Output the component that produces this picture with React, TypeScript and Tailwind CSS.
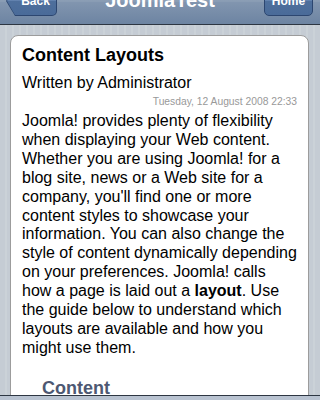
import React from "react";

const font = { fontFamily: '"Liberation Sans", Arial, Helvetica, sans-serif' };

function BackButton() {
  return (
    <div className="relative h-[30px] w-[51px] rounded-r-[5px] bg-[#2c4670] [clip-path:polygon(0_50%,9px_0,100%_0,100%_100%,9px_100%)]">
      <div className="absolute inset-[1px] rounded-r-[4px] bg-[linear-gradient(#7d99bf,#6181ae_50%,#4e6f9c_51%,#4a6b99)] [clip-path:polygon(0_50%,8px_0,100%_0,100%_100%,8px_100%)]" />
      <span className="relative flex h-full items-center justify-center pl-[8px] text-[12px] font-bold text-white">
        Back
      </span>
    </div>
  );
}

function HomeButton() {
  return (
    <div className="flex h-[30px] w-[49px] items-center justify-center rounded-[5px] border border-[#2c4670] bg-[linear-gradient(#7d99bf,#6181ae_50%,#4e6f9c_51%,#4a6b99)] text-[12px] font-bold text-white">
      Home
    </div>
  );
}

export default function App() {
  return (
    <div className="flex h-[400px] w-[320px] flex-col overflow-hidden" style={font}>
      <header className="-mt-[20px] grid h-[45px] shrink-0 grid-cols-[1fr_auto_1fr] items-center border-b border-[#2d3642] bg-[linear-gradient(#cdd5df,#b0bccd_3%,#889bb3_50%,#8195af_51%,#6d84a2)] px-[6px]">
        <div className="-mt-[2px] flex justify-start">
          <BackButton />
        </div>
        <h1 className="-mt-[4px] text-[20px] font-bold text-white">JoomlaTest</h1>
        <div className="-mt-[2px] flex justify-end pr-[1px]">
          <HomeButton />
        </div>
      </header>

      <main className="flex-1 overflow-hidden bg-[image:repeating-linear-gradient(90deg,#c5ccd4_0px,#c5ccd4_5px,#cbd2d8_5px,#cbd2d8_7px)] pl-[10px] pr-[11px] pt-[10px]">
        <div className="rounded-[8px] border border-[#9c9c9c] bg-white px-[11px] pt-[9px] pb-4 text-black">
          <h2 className="text-[18px] font-bold leading-[21px]">Content Layouts</h2>
          <p className="mt-[7px] text-[16px] leading-[19px]">Written by Administrator</p>
          <p className="mt-[4px] text-right text-[10.3px] leading-[12px] text-[#999]">
            Tuesday, 12 August 2008 22:33
          </p>
          <p className="mt-[4px] text-[16px] leading-[18.9px]">
            Joomla! provides plenty of flexibility when displaying your Web content. Whether you are
            using Joomla! for a blog site, news or a Web site for a company, you'll find one or more
            content styles to showcase your information. You can also change the style of content
            dynamically depending on your preferences. Joomla! calls how a page is laid out a{" "}
            <b>layout</b>. Use the guide below to understand which layouts are available and how you
            might use them.
          </p>
          <h3 className="mt-[20px] pl-[20px] text-[18px] font-bold leading-[21px] text-[#4d5872]">
            Content
          </h3>
        </div>
      </main>

      <footer className="h-[5px] shrink-0 border-t border-[#2d3642] bg-[#b9c3d1]" />
    </div>
  );
}
